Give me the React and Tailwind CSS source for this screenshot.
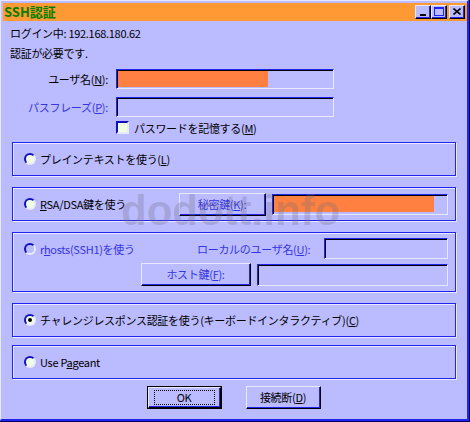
import React from "react";

function Sunken({ className = "", children }) {
  return (
    <div className={`border-t border-l border-r border-b border-t-[#2323F0] border-l-[#2323F0] border-r-[#E8E8FF] border-b-[#E8E8FF] ${className}`}>
      <div className="w-full h-full border-t border-l border-t-black border-l-black flex">
        {children}
      </div>
    </div>
  );
}

function Raised({ className = "", children, isDefault = false }) {
  const inner = (
    <div className="w-full h-full border-t border-l border-r border-b border-t-[#E8E8FF] border-l-[#E8E8FF] border-r-black border-b-black">
      <div className="w-full h-full border-r border-b border-r-[#2323F0] border-b-[#2323F0] flex items-center justify-center">
        {children}
      </div>
    </div>
  );
  if (isDefault) {
    return <div className={`border border-black ${className}`}>{inner}</div>;
  }
  return <div className={className}>{inner}</div>;
}

function Radio({ checked = false, disabled = false }) {
  return (
    <div
      className={`w-[12px] h-[12px] rounded-full border-2 border-t-[#1010C0] border-l-[#1010C0] border-r-[#E8E8FF] border-b-[#E8E8FF] flex items-center justify-center shrink-0 ${
        disabled ? "bg-[#BBBBFF]" : "bg-[#F0FFE0]"
      }`}
    >
      {checked && <div className="w-[4px] h-[4px] rounded-full bg-black" />}
    </div>
  );
}

function Group({ className = "", children }) {
  return (
    <div
      className={`ml-[9px] w-[444px] border border-[#2323F0] shadow-[1px_1px_0_#E8E8FF,inset_1px_1px_0_#E8E8FF] ${className}`}
    >
      {children}
    </div>
  );
}

function U({ children }) {
  return <span className="underline underline-offset-[1px]">{children}</span>;
}

function TitleBtn({ children }) {
  return (
    <div className="w-[16px] h-[14px] border-t border-l border-r border-b border-t-[#E8E8FF] border-l-[#E8E8FF] border-r-black border-b-black bg-[#BBBBFF]">
      <div className="w-full h-full border-r border-b border-r-[#2323F0] border-b-[#2323F0] flex items-center justify-center">
        {children}
      </div>
    </div>
  );
}

export default function App() {
  return (
    <div className="w-[470px] h-[422px] border-r border-b border-r-[#000060] border-b-[#000060]">
      <div className="relative w-full h-full bg-[#BBBBFF] border-t border-l border-t-[#E8E8FF] border-l-[#E8E8FF] border-r-2 border-b-2 border-r-[#2323F0] border-b-[#2323F0] pl-[2px] pt-[2px] flex flex-col text-[11px] leading-[14px] tracking-[-0.3px] text-black font-['Noto_Sans_CJK_JP','Noto_Sans',sans-serif]">
        {/* Title bar */}
        <div className="h-[18px] bg-[#FF9933] flex items-center justify-between pr-[2px]">
          <span className="pl-[1px] text-[13px] leading-[16px] tracking-normal font-bold text-[#008000]">SSH認証</span>
          <div className="flex items-center">
            <TitleBtn>
              <div className="w-[6px] h-[2px] bg-black mt-[6px]" />
            </TitleBtn>
            <TitleBtn>
              <div className="w-[10px] h-[9px] border border-[#2323F0] border-t-2" />
            </TitleBtn>
            <div className="w-[2px]" />
            <TitleBtn>
              <svg width="8" height="7" viewBox="0 0 8 7">
                <path d="M0.5 0.5 L7.5 6.5 M7.5 0.5 L0.5 6.5" stroke="black" strokeWidth="1.6" />
              </svg>
            </TitleBtn>
          </div>
        </div>

        <div className="ml-[7px] mt-[5px]">ログイン中: 192.168.180.62</div>
        <div className="ml-[7px] mt-[6px]">認証が必要です.</div>

        {/* user name */}
        <div className="mt-[9px] flex items-center h-[20px]">
          <div className="w-[113px] pr-[8px] text-right">
            ユーザ名(<U>N</U>):
          </div>
          <Sunken className="w-[218px] h-[20px]">
            <div className="w-[150px] h-[16px] bg-[#FF8040]" />
          </Sunken>
        </div>

        {/* passphrase */}
        <div className="mt-[8px] flex items-center h-[20px]">
          <div className="w-[113px] pr-[8px] text-right text-[#3535E0]">
            パスフレーズ(<U>P</U>):
          </div>
          <Sunken className="w-[218px] h-[20px]" />
        </div>

        {/* checkbox */}
        <div className="mt-[4px] ml-[113px] flex items-center h-[13px]">
          <div className="w-[13px] h-[13px] border-2 border-t-[#1010C0] border-l-[#1010C0] border-r-[#E8E8FF] border-b-[#E8E8FF] bg-[#F0FFE0]" />
          <span className="ml-[5px]">
            パスワードを記憶する(<U>M</U>)
          </span>
        </div>

        {/* Group 1 */}
        <Group className="mt-[8px] h-[34px] flex items-center pl-[11px]">
          <Radio />
          <span className="ml-[4px]">
            プレインテキストを使う(<U>L</U>)
          </span>
        </Group>

        {/* Group 2 */}
        <Group className="mt-[11px] h-[34px] flex items-center pl-[11px]">
          <Radio />
          <span className="ml-[4px] w-[139px]">
            <U>R</U>SA/DSA鍵を使う
          </span>
          <Raised className="w-[87px] h-[23px]">
            <span className="text-[#3535E0]">
              秘密鍵(<U>K</U>):
            </span>
          </Raised>
          <Sunken className="ml-[6px] w-[176px] h-[21px]">
            <div className="w-[160px] h-[16px] bg-[#FF8040]" />
          </Sunken>
        </Group>

        {/* Group 3 */}
        <Group className="mt-[11px] h-[60px] flex flex-col pt-[5px]">
          <div className="flex items-center h-[21px] pl-[11px]">
            <Radio disabled />
            <span className="ml-[4px] w-[157px] text-[#3535E0]">
              r<U>h</U>osts(SSH1)を使う
            </span>
            <span className="w-[127px] text-[#3535E0]">
              ローカルのユーザ名(<U>U</U>):
            </span>
            <Sunken className="w-[124px] h-[21px]" />
          </div>
          <div className="flex items-center mt-[4px] h-[23px] pl-[128px]">
            <Raised className="w-[110px] h-[23px]">
              <span className="text-[#3535E0]">
                ホスト鍵(<U>F</U>):
              </span>
            </Raised>
            <Sunken className="ml-[6px] w-[191px] h-[22px]" />
          </div>
        </Group>

        {/* Group 4 */}
        <Group className="mt-[11px] h-[34px] flex items-center pl-[11px]">
          <Radio checked />
          <span className="ml-[4px]">
            チャレンジレスポンス認証を使う(キーボードインタラクティブ)(<U>C</U>)
          </span>
        </Group>

        {/* Group 5 */}
        <Group className="mt-[8px] h-[34px] flex items-center pl-[11px]">
          <Radio />
          <span className="ml-[4px]">
            Use P<U>a</U>geant
          </span>
        </Group>

        {/* Buttons */}
        <div className="mt-[7px] flex justify-center gap-[24px] pr-[2px]">
          <Raised isDefault className="w-[75px] h-[23px]">
            <div className="w-[61px] h-[15px] border border-dotted border-black flex items-center justify-center">
              OK
            </div>
          </Raised>
          <Raised className="w-[75px] h-[23px]">
            接続断(<U>D</U>)
          </Raised>
        </div>

        {/* watermark */}
        <div className="absolute left-[120px] top-[185px] pointer-events-none text-[42px] leading-[50px] tracking-normal font-bold text-[rgba(110,110,130,0.28)] font-['Liberation_Sans',sans-serif]">
          dodott.info
        </div>
      </div>
    </div>
  );
}
